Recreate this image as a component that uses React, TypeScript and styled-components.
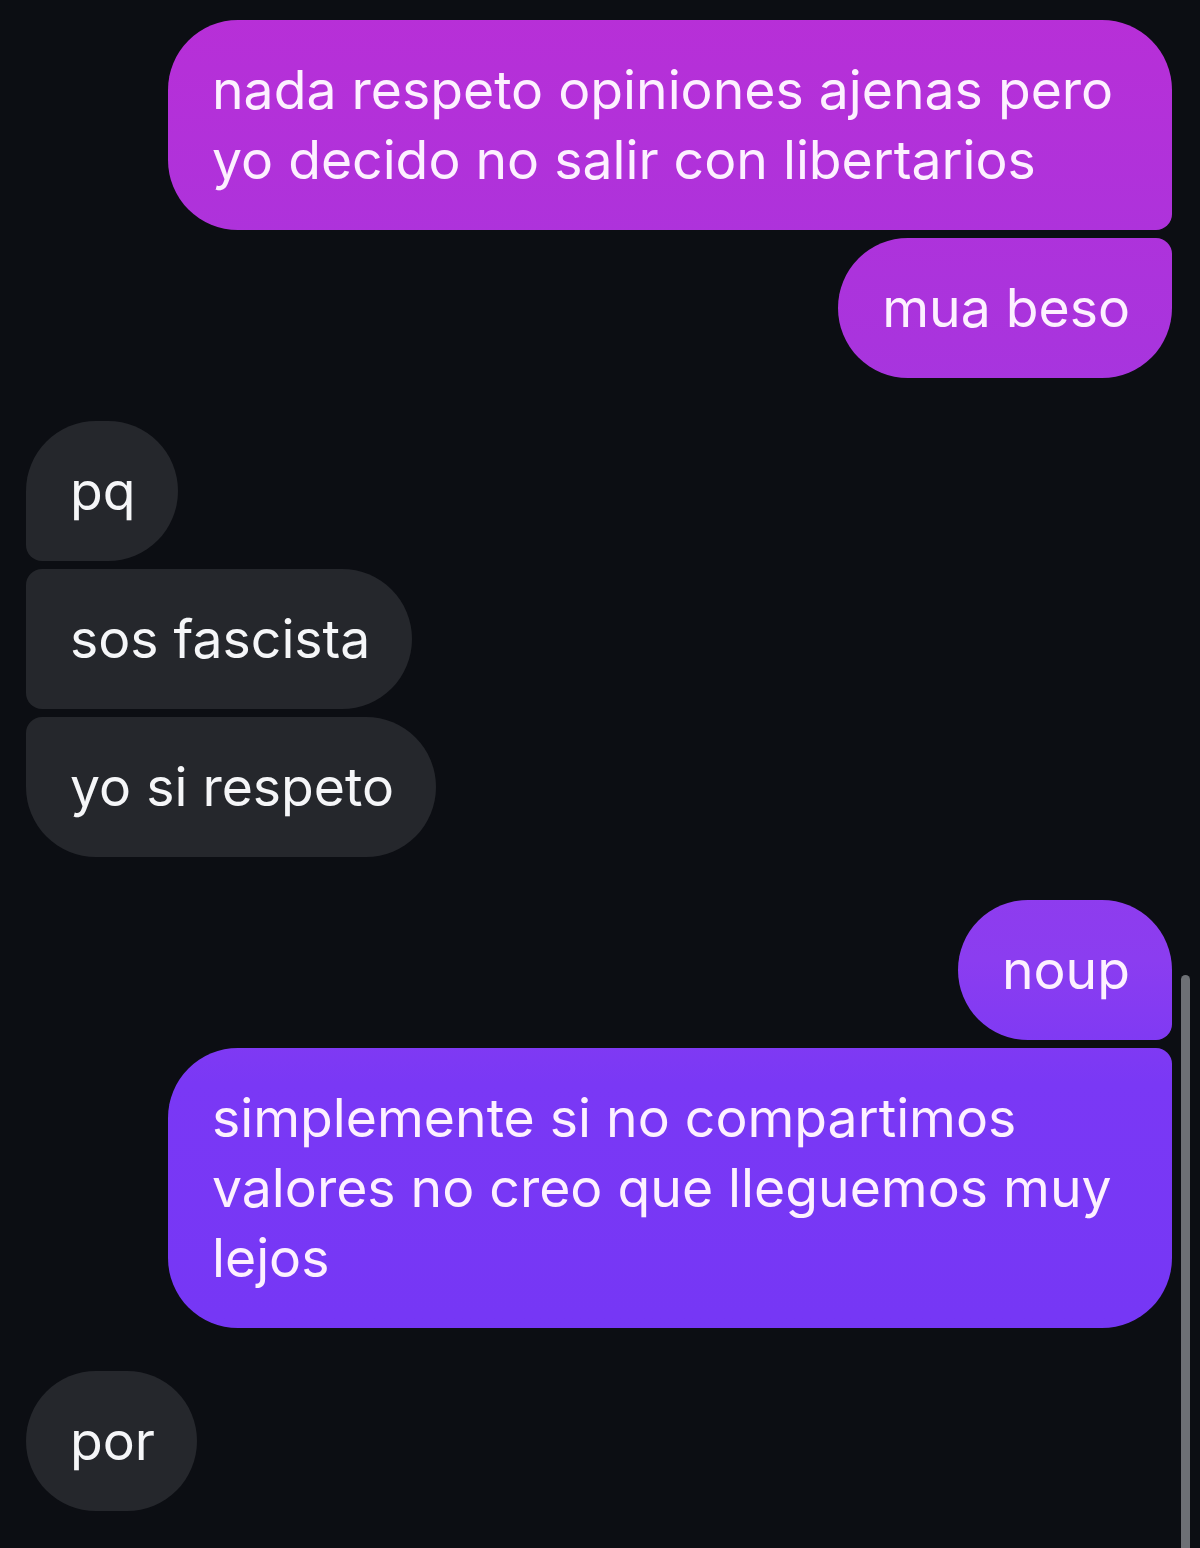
import React from 'react';
import styled, { createGlobalStyle, css } from 'styled-components';

type Side = 'in' | 'out';
type Pos = 'single' | 'first' | 'middle' | 'last';

interface Message {
  id: number;
  side: Side;
  text: string;
}

const messages: Message[] = [
  { id: 1, side: 'out', text: 'nada respeto opiniones ajenas pero\nyo decido no salir con libertarios' },
  { id: 2, side: 'out', text: 'mua beso' },
  { id: 3, side: 'in', text: 'pq' },
  { id: 4, side: 'in', text: 'sos fascista' },
  { id: 5, side: 'in', text: 'yo si respeto' },
  { id: 6, side: 'out', text: 'noup' },
  { id: 7, side: 'out', text: 'simplemente si no compartimos\nvalores no creo que lleguemos muy\nlejos' },
  { id: 8, side: 'in', text: 'por' },
];

const GlobalStyle = createGlobalStyle`
  html, body {
    margin: 0;
    padding: 0;
    background: #0c0e13;
  }
  body {
    font-family: Inter, "Noto Sans", sans-serif;
    -webkit-font-smoothing: antialiased;
  }
`;

const Screen = styled.div`
  position: relative;
  width: 1200px;
  height: 1548px;
  overflow: hidden;
  background: #0c0e13;
`;

const Thread = styled.div`
  display: flex;
  flex-direction: column;
  gap: 43px;
  padding: 20px 28px 0 26px;
`;

const Group = styled.div<{ $side: Side }>`
  display: flex;
  flex-direction: column;
  gap: 8px;
  align-items: ${({ $side }) => ($side === 'out' ? 'flex-end' : 'flex-start')};
`;

const BIG = '70px';
const SMALL = '16px';

const radius = (side: Side, pos: Pos) => {
  const top = pos === 'single' || pos === 'first' ? BIG : SMALL;
  const bottom = pos === 'single' || pos === 'last' ? BIG : SMALL;
  // top-left top-right bottom-right bottom-left
  return side === 'out'
    ? `${BIG} ${top} ${bottom} ${BIG}`
    : `${top} ${BIG} ${BIG} ${bottom}`;
};

const Bubble = styled.div<{ $side: Side; $pos: Pos; $wrapped: boolean }>`
  box-sizing: border-box;
  padding: 35px 42px 35px 44px;
  font-size: 53.5px;
  line-height: 70px;
  white-space: pre;
  letter-spacing: 0;
  border-radius: ${({ $side, $pos }) => radius($side, $pos)};
  ${({ $wrapped }) => $wrapped && 'width: 1004px;'}

  ${({ $side }) =>
    $side === 'out'
      ? css`
          color: #fdf0ff;
          background: linear-gradient(
            180deg,
            #b82fd7 0%,
            #a934dd 22%,
            #8b3df0 62%,
            #7a38f5 70%,
            #7236f5 100%
          );
          background-attachment: fixed;
        `
      : css`
          color: #f5f6f8;
          background: #25272c;
        `}
`;

const ScrollThumb = styled.div`
  position: absolute;
  right: 10px;
  top: 975px;
  width: 9px;
  height: 620px;
  border-radius: 5px;
  background: #6d7075;
`;

const groupMessages = (list: Message[]) => {
  const groups: Message[][] = [];
  list.forEach((m) => {
    const last = groups[groups.length - 1];
    if (last && last[0].side === m.side) last.push(m);
    else groups.push([m]);
  });
  return groups;
};

const posOf = (index: number, count: number): Pos => {
  if (count === 1) return 'single';
  if (index === 0) return 'first';
  if (index === count - 1) return 'last';
  return 'middle';
};

const App: React.FC = () => {
  const groups = groupMessages(messages);

  return (
    <Screen>
      <GlobalStyle />
      <Thread>
        {groups.map((group) => (
          <Group key={group[0].id} $side={group[0].side}>
            {group.map((m, i) => (
              <Bubble
                key={m.id}
                $side={m.side}
                $pos={posOf(i, group.length)}
                $wrapped={m.text.includes('\n')}
              >
                {m.text}
              </Bubble>
            ))}
          </Group>
        ))}
      </Thread>
      <ScrollThumb />
    </Screen>
  );
};

export default App;
